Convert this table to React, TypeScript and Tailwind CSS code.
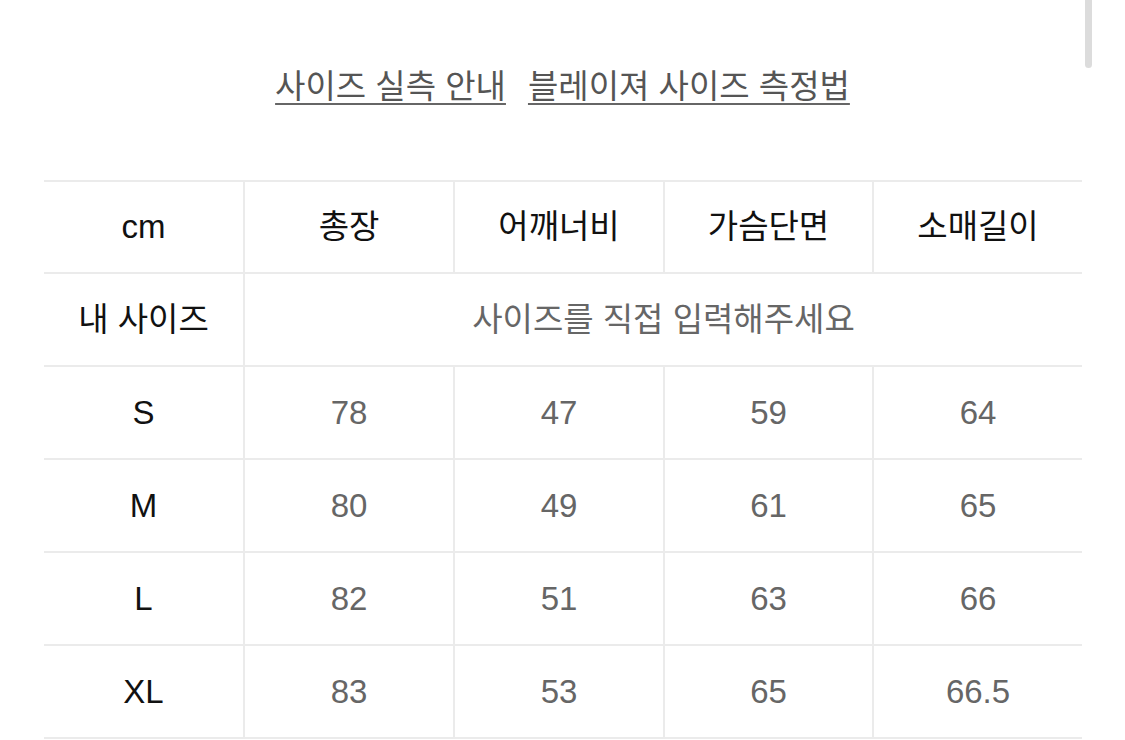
import React from "react";

const cols = ["총장", "어깨너비", "가슴단면", "소매길이"];

const rows = [
  { size: "S", values: ["78", "47", "59", "64"] },
  { size: "M", values: ["80", "49", "61", "65"] },
  { size: "L", values: ["82", "51", "63", "66"] },
  { size: "XL", values: ["83", "53", "65", "66.5"] },
];

const font = { fontFamily: '"Liberation Sans", "Noto Sans CJK KR", sans-serif' };

const SizePage = () => {
  return (
    <div className="relative w-[1125px] h-[740px] overflow-hidden bg-white" style={font}>
      {/* scrollbar */}
      <div className="absolute right-[33px] top-0 w-[7px] h-[68px] rounded-b-full bg-[#dcdcdc]" />

      {/* links */}
      <div className="flex justify-center gap-[22px] pt-[64px] h-[180px]">
        <a className="text-[33px] leading-[45px] text-[#555] underline decoration-2 underline-offset-[5px] decoration-[#666]">
          사이즈 실측 안내
        </a>
        <a className="text-[33px] leading-[45px] text-[#555] underline decoration-2 underline-offset-[5px] decoration-[#666]">
          블레이져 사이즈 측정법
        </a>
      </div>

      {/* table */}
      <div className="mx-[44px] w-[1038px] border-t-2 border-[#ebebeb]">
        <div className="grid grid-cols-[199px_210px_210px_209px_210px] h-[92px] border-b-2 border-[#ebebeb] text-[33px] text-[#111]">
          <div className="flex items-center justify-center">cm</div>
          {cols.map((c) => (
            <div key={c} className="flex items-center justify-center border-l-2 border-[#ebebeb]">
              {c}
            </div>
          ))}
        </div>

        <div className="grid grid-cols-[199px_839px] h-[93px] border-b-2 border-[#ebebeb] text-[33px]">
          <div className="flex items-center justify-center text-[#111]">내 사이즈</div>
          <div className="flex items-center justify-center border-l-2 border-[#ebebeb] text-[#666]">
            사이즈를 직접 입력해주세요
          </div>
        </div>

        {rows.map((r) => (
          <div
            key={r.size}
            className="grid grid-cols-[199px_210px_210px_209px_210px] h-[93px] border-b-2 border-[#ebebeb] text-[33px]"
          >
            <div className="flex items-center justify-center text-[#111]">{r.size}</div>
            {r.values.map((v, i) => (
              <div key={i} className="flex items-center justify-center border-l-2 border-[#ebebeb] text-[#666]">
                {v}
              </div>
            ))}
          </div>
        ))}
      </div>
    </div>
  );
};

export default function App() {
  return <SizePage />;
}
